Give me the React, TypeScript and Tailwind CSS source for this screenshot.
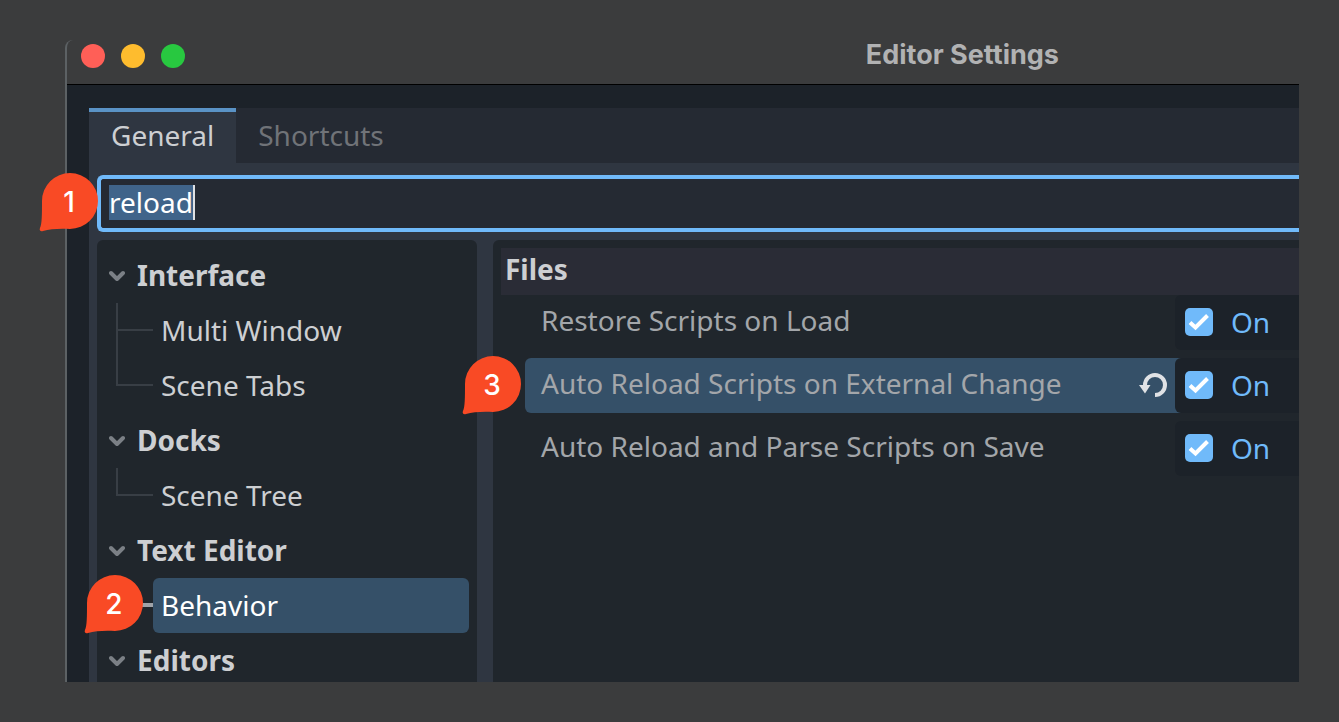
import { FunctionComponent } from "react";
import clsx from "clsx";

const tree = [
  { label: "Interface", items: ["Multi Window", "Scene Tabs"] },
  { label: "Docks", items: ["Scene Tree"] },
  { label: "Text Editor", items: ["Behavior"] },
  { label: "Editors", items: [] },
];

const settings = [
  { id: "restore-scripts", label: "Restore Scripts on Load" },
  {
    id: "auto-reload-external",
    label: "Auto Reload Scripts on External Change",
    changed: true,
  },
  { id: "auto-reload-save", label: "Auto Reload and Parse Scripts on Save" },
];

const Badge: FunctionComponent<{ step: number; className: string }> = ({
  step,
  className,
}) => (
  <div
    className={clsx(
      "absolute z-10 size-[60px] pointer-events-none font-['Inter',sans-serif] font-medium text-white",
      className
    )}
  >
    <svg viewBox="0 0 60 60" className="absolute inset-0" aria-hidden="true">
      <path
        d="M31 1A28 28 0 1 1 31 57C20 56.500 11 57 4 59C1.500 60 0 58 1 56C3 52 3 42 3 29A28 28 0 0 1 31 1Z"
        fill="#f94a25"
      />
    </svg>
    <span className="relative flex h-[60px] items-center justify-center text-[28px]">
      {step}
    </span>
  </div>
);

const Chevron = () => (
  <svg width="16" height="12" viewBox="0 0 16 12" aria-hidden="true">
    <path
      d="M2 3L8 9L14 3"
      fill="none"
      stroke="#7b8086"
      strokeWidth="4"
      strokeLinecap="round"
      strokeLinejoin="round"
    />
  </svg>
);

const ResetIcon = () => (
  <svg width="28" height="28" viewBox="0 0 28 28" aria-hidden="true">
    <path
      d="M6 15V13A10 10 0 1 1 16 23"
      fill="none"
      stroke="#e0e2e5"
      strokeWidth="4"
    />
    <path d="M0 13H11.500L6 21.500Z" fill="#e0e2e5" />
  </svg>
);

const TreeItem: FunctionComponent<{
  label: string;
  selected: boolean;
  last: boolean;
}> = ({ label, selected, last }) => (
  <li className="relative flex h-[55px]">
    {selected && <Badge step={2} className="-left-[21px] -top-[4px]" />}
    <div className="ml-[11px] flex w-[37px] flex-col">
      <div
        className={clsx(
          "border-l-2",
          selected
            ? "h-[29px] border-b-4 border-[#9fa3a8]"
            : "h-[28px] border-b-2 border-[#383e45]"
        )}
      />
      {!last && <div className="flex-1 border-l-2 border-[#383e45]" />}
    </div>
    <button
      className={clsx(
        "flex-1 rounded-md px-2 text-left",
        selected ? "bg-[#355068] text-white" : "text-[#cdcfd2]"
      )}
    >
      {label}
    </button>
  </li>
);

const SettingRow: FunctionComponent<{
  id: string;
  label: string;
  changed?: boolean;
}> = ({ id, label, changed }) => (
  <div
    className={clsx(
      "relative ml-6 flex h-[55px]",
      changed && "rounded-l-md bg-[#355068]"
    )}
  >
    {changed && <Badge step={3} className="-left-[63px] -top-[3px]" />}
    <label
      htmlFor={id}
      className="flex flex-1 items-center pb-1 pl-4 text-[#a3a6aa]"
    >
      {label}
    </label>
    {changed && (
      <button aria-label="Reset to default" className="px-2">
        <ResetIcon />
      </button>
    )}
    <div className="flex w-[124px] items-center gap-[18px] rounded-l-md bg-[#1c2229] pl-[10px] text-[#70bafa]">
      <span className="grid h-[30px] w-7">
        <input
          id={id}
          type="checkbox"
          defaultChecked
          className="peer col-start-1 row-start-1 size-7 appearance-none rounded-[5px] bg-[#363d4a] checked:bg-[#70bafa]"
        />
        <svg
          viewBox="0 0 28 28"
          className="pointer-events-none invisible col-start-1 row-start-1 size-7 peer-checked:visible"
          aria-hidden="true"
        >
          <path
            d="M5 14.500L10.500 19.500L22.500 7.500"
            fill="none"
            stroke="#fff"
            strokeWidth="4"
          />
        </svg>
      </span>
      <span>On</span>
    </div>
  </div>
);

const App: FunctionComponent = () => {
  return (
    <div className="flex h-screen flex-col bg-[#3b3c3d] py-10 pl-[65px] pr-10 font-['Noto_Sans',sans-serif] text-[28px] leading-[35px]">
      <div className="flex min-h-0 flex-1 flex-col rounded-tl-lg border-l-2 border-[#5c6164]">
        <header className="flex h-11 items-start pl-[14px] pr-60">
          <div className="flex gap-4 pt-1">
            <button aria-label="Close" className="size-6 rounded-full bg-[#ff5f57]" />
            <button aria-label="Minimize" className="size-6 rounded-full bg-[#febc2e]" />
            <button aria-label="Zoom" className="size-6 rounded-full bg-[#28c840]" />
          </div>
          <h1 className="ml-auto font-['Inter',sans-serif] text-[27px] font-bold leading-[30px] text-[#b1b2b3]">
            Editor Settings
          </h1>
        </header>

        <div className="flex min-h-0 flex-1 flex-col border-t border-black bg-[#1c2229] pl-[22px] pt-[23px]">
          <nav className="flex h-[55px] bg-[#252a33]">
            <button className="border-t-4 border-[#5a93c6] bg-[#2f3641] px-[22px] pb-1 text-[#cdcfd2]">
              General
            </button>
            <button className="border-t-4 border-transparent px-[22px] pb-1 text-[#707378]">
              Shortcuts
            </button>
          </nav>

          <main className="flex min-h-0 flex-1 flex-col gap-2 bg-[#2f3641] pl-2 pt-3">
            <div className="relative flex h-[57px] items-start rounded-l-md border-4 border-r-0 border-[#70bafa] bg-[#252a33] pl-2 pt-[6px]">
              <Badge step={1} className="-left-[62px] -top-[7px]" />
              <input
                aria-label="Filter settings"
                defaultValue="reload"
                className="field-sizing-content h-[35px] border-r-2 border-[#dfe1e3] bg-[#40648a] text-white outline-none"
              />
            </div>

            <div className="flex min-h-0 flex-1 gap-4">
              <ul className="w-[380px] shrink-0 rounded-t-md bg-[#20262c] p-2">
                {tree.map(({ label, items }) => (
                  <li key={label}>
                    <button className="flex h-[55px] w-full items-center gap-3 pl-1 font-bold text-[#cdcfd2]">
                      <Chevron />
                      {label}
                    </button>
                    <ul>
                      {items.map((item, index) => (
                        <TreeItem
                          key={item}
                          label={item}
                          selected={item === "Behavior"}
                          last={index === items.length - 1}
                        />
                      ))}
                    </ul>
                  </li>
                ))}
              </ul>

              <section className="flex-1 rounded-tl-md bg-[#20262c] pl-2 pt-2">
                <h2 className="flex h-[47px] items-center bg-[#2a2c36] pb-1 pl-1 font-bold text-[#cdcfd2]">
                  Files
                </h2>
                <div className="flex flex-col gap-2">
                  {settings.map((setting) => (
                    <SettingRow key={setting.id} {...setting} />
                  ))}
                </div>
              </section>
            </div>
          </main>
        </div>
      </div>
    </div>
  );
};

export default App;
